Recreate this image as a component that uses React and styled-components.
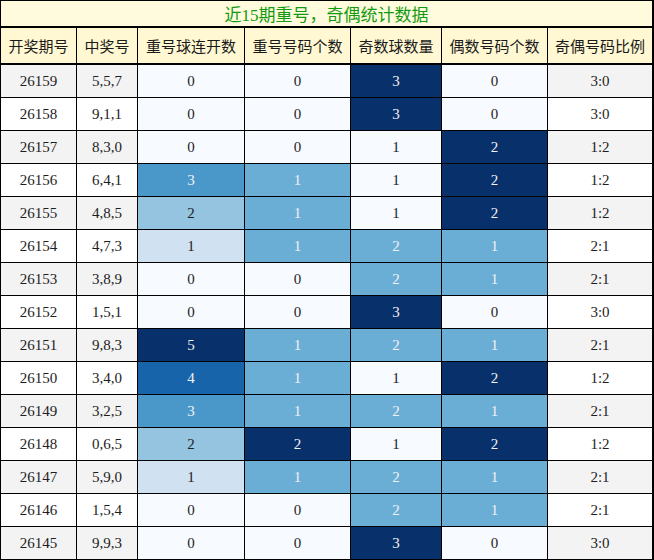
import React from "react";
import styled, { createGlobalStyle } from "styled-components";

const Global = createGlobalStyle`
  html, body { margin: 0; padding: 0; background: #ffffff; }
  body { font-family: "Liberation Serif", "Noto Sans CJK SC", serif; }
`;

const Table = styled.div`
  display: grid;
  grid-template-columns: 75px 60px 106px 105px 90px 105px 104px;
  grid-template-rows: 26px 36px repeat(15, 32px);
  gap: 1px;
  padding: 1px 2px 1px 1px;
  background: #000000;
  width: max-content;
`;

const Title = styled.div`
  grid-column: 1 / -1;
  box-sizing: border-box;
  border-bottom: 1px solid #000;
  background: #fffbdc;
  color: #139a13;
  font-size: 17px;
  display: flex;
  align-items: center;
  justify-content: center;
  font-family: "Liberation Serif", "Noto Sans CJK SC", serif;
`;

const Head = styled.div`
  box-sizing: border-box;
  border-bottom: 1px solid #000;
  background: #fff8d2;
  color: #1a1a1a;
  font-size: 15px;
  display: flex;
  align-items: center;
  justify-content: center;
  font-family: "Noto Sans CJK SC", sans-serif;
  white-space: nowrap;
`;

const Cell = styled.div`
  background: ${(p) => p.$bg};
  color: ${(p) => p.$fg};
  font-size: 15px;
  display: flex;
  align-items: center;
  justify-content: center;
  font-family: "Liberation Serif", "Noto Sans CJK SC", serif;
`;

const headers = ["开奖期号", "中奖号", "重号球连开数", "重号号码个数", "奇数球数量", "偶数号码个数", "奇偶号码比例"];

const rows = [
  ["26159", "5,5,7", 0, 0, 3, 0, "3:0"],
  ["26158", "9,1,1", 0, 0, 3, 0, "3:0"],
  ["26157", "8,3,0", 0, 0, 1, 2, "1:2"],
  ["26156", "6,4,1", 3, 1, 1, 2, "1:2"],
  ["26155", "4,8,5", 2, 1, 1, 2, "1:2"],
  ["26154", "4,7,3", 1, 1, 2, 1, "2:1"],
  ["26153", "3,8,9", 0, 0, 2, 1, "2:1"],
  ["26152", "1,5,1", 0, 0, 3, 0, "3:0"],
  ["26151", "9,8,3", 5, 1, 2, 1, "2:1"],
  ["26150", "3,4,0", 4, 1, 1, 2, "1:2"],
  ["26149", "3,2,5", 3, 1, 2, 1, "2:1"],
  ["26148", "0,6,5", 2, 2, 1, 2, "1:2"],
  ["26147", "5,9,0", 1, 1, 2, 1, "2:1"],
  ["26146", "1,5,4", 0, 0, 2, 1, "2:1"],
  ["26145", "9,9,3", 0, 0, 3, 0, "3:0"],
];

const DARK = "#1e1e1e";
const LIGHT = "#f1f1f1";

const scales = [
  { 0: ["#f7fbff", DARK], 1: ["#d0e1f2", DARK], 2: ["#94c4df", DARK], 3: ["#4a98c9", LIGHT], 4: ["#1764ab", LIGHT], 5: ["#08306b", LIGHT] },
  { 0: ["#f7fbff", DARK], 1: ["#6aaed6", LIGHT], 2: ["#08306b", LIGHT] },
  { 1: ["#f7fbff", DARK], 2: ["#6aaed6", LIGHT], 3: ["#08306b", LIGHT] },
  { 0: ["#f7fbff", DARK], 1: ["#6aaed6", LIGHT], 2: ["#08306b", LIGHT] },
];

export default function App() {
  return (
    <>
      <Global />
      <Table>
        <Title>近15期重号，奇偶统计数据</Title>
        {headers.map((h) => (
          <Head key={h}>{h}</Head>
        ))}
        {rows.map((r, i) => {
          const plain = i % 2 === 0 ? "#f3f3f3" : "#ffffff";
          return (
            <React.Fragment key={r[0]}>
              <Cell $bg={plain} $fg={DARK}>{r[0]}</Cell>
              <Cell $bg={plain} $fg={DARK}>{r[1]}</Cell>
              {[2, 3, 4, 5].map((c, k) => {
                const [bg, fg] = scales[k][r[c]];
                return (
                  <Cell key={c} $bg={bg} $fg={fg}>{r[c]}</Cell>
                );
              })}
              <Cell $bg={plain} $fg={DARK}>{r[6]}</Cell>
            </React.Fragment>
          );
        })}
      </Table>
    </>
  );
}
